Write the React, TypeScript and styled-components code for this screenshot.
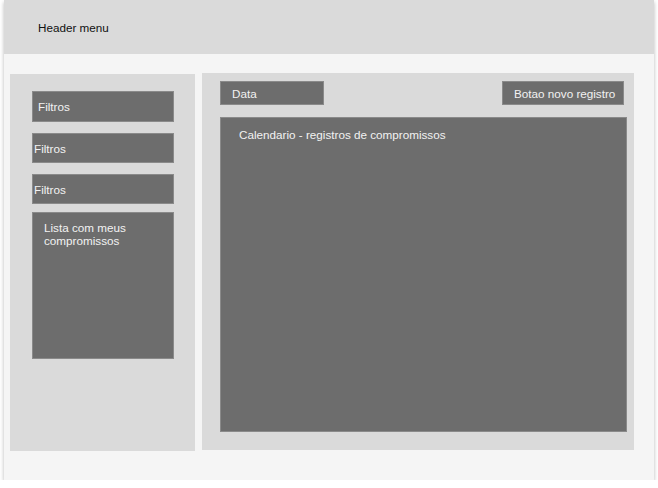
import React from "react";
import styled, { createGlobalStyle } from "styled-components";

const GlobalStyle = createGlobalStyle`
  html, body {
    margin: 0;
    padding: 0;
    background: #ffffff;
  }
  body {
    font-family: "Liberation Sans", Arial, sans-serif;
    font-size: 11.7px;
  }
`;

const Frame = styled.div`
  width: 650px;
  height: 480px;
  margin: 0 4px;
  background: #f5f5f5;
  box-shadow: 0 2px 4px rgba(0, 0, 0, 0.28);
  display: flex;
  flex-direction: column;
`;

const Header = styled.header`
  height: 54px;
  flex: none;
  background: #dadada;
  display: flex;
  align-items: center;
  padding-left: 34px;
  color: #111111;
`;

const Main = styled.main`
  display: flex;
  align-items: flex-start;
  gap: 7px;
  padding: 19px 0 0 6px;
`;

const Sidebar = styled.aside`
  width: 185px;
  height: 377px;
  margin-top: 1px;
  background: #dadada;
  display: flex;
  flex-direction: column;
  padding: 17px 0 0 22px;
  box-sizing: border-box;
`;

const Block = styled.div<{ $h: number; $gap: number; $pad: number }>`
  width: 142px;
  height: ${(p) => p.$h}px;
  margin-bottom: ${(p) => p.$gap}px;
  box-sizing: border-box;
  background: #6d6d6d;
  border: 1px solid #8a8a8a;
  color: #f2f2f2;
  display: flex;
  align-items: center;
  padding-left: ${(p) => p.$pad}px;
`;

const ListBox = styled.div`
  width: 142px;
  height: 147px;
  box-sizing: border-box;
  background: #6d6d6d;
  border: 1px solid #8a8a8a;
  color: #f2f2f2;
  padding: 8px 0 0 11px;
  line-height: 13px;
`;

const Content = styled.section`
  width: 432px;
  height: 377px;
  background: #dadada;
  box-sizing: border-box;
  padding: 8px 10px 0 18px;
  display: flex;
  flex-direction: column;
`;

const Toolbar = styled.div`
  display: flex;
  justify-content: space-between;
  height: 24px;
  margin-bottom: 12px;
`;

const ToolButton = styled.div<{ $w: number; $pl: number }>`
  width: ${(p) => p.$w}px;
  height: 24px;
  box-sizing: border-box;
  background: #6d6d6d;
  border: 1px solid #8a8a8a;
  color: #f2f2f2;
  display: flex;
  align-items: center;
  white-space: nowrap;
  padding-left: ${(p) => p.$pl}px;
`;

const Calendar = styled.div`
  width: 407px;
  height: 315px;
  box-sizing: border-box;
  background: #6d6d6d;
  border: 1px solid #8a8a8a;
  color: #f2f2f2;
  padding: 10px 0 0 18px;
`;

export default function App() {
  return (
    <>
      <GlobalStyle />
      <Frame>
        <Header>Header menu</Header>
        <Main>
          <Sidebar>
            <Block $h={31} $gap={11} $pad={5}>Filtros</Block>
            <Block $h={30} $gap={11} $pad={1}>Filtros</Block>
            <Block $h={30} $gap={8} $pad={1}>Filtros</Block>
            <ListBox>
              Lista com meus
              <br />
              compromissos
            </ListBox>
          </Sidebar>
          <Content>
            <Toolbar>
              <ToolButton $w={104} $pl={11}>Data</ToolButton>
              <ToolButton $w={122} $pl={11}>Botao novo registro</ToolButton>
            </Toolbar>
            <Calendar>Calendario - registros de compromissos</Calendar>
          </Content>
        </Main>
      </Frame>
    </>
  );
}
